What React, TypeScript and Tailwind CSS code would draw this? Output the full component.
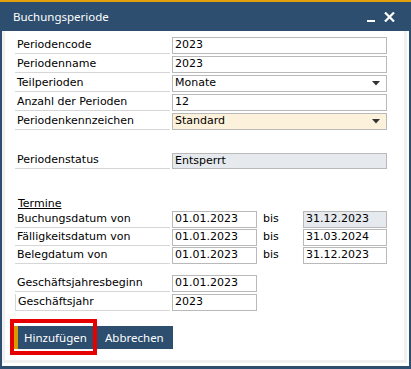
import React from "react";

const F = { fontFamily: '"DejaVu Sans", Tahoma, sans-serif' };
const UI = { fontFamily: '"Noto Sans", "Open Sans", sans-serif' };

function Label({ children, className = "" }: { children: React.ReactNode; className?: string }) {
  return (
    <div
      className={`w-[155px] h-full flex items-center pl-[2px] border-b border-[#d6d6d6] text-[11px] text-black ${className}`}
    >
      {children}
    </div>
  );
}

function Input({
  value,
  w = "w-[215px]",
  bg = "bg-white",
  dropdown = false,
}: {
  value: string;
  w?: string;
  bg?: string;
  dropdown?: boolean;
}) {
  return (
    <div
      className={`${w} ${bg} h-full border border-[#b9b9b9] flex items-center pl-[2px] pr-[6px] text-[11px] text-black justify-between`}
    >
      <span>{value}</span>
      {dropdown && (
        <svg width="8" height="5" viewBox="0 0 8 5">
          <path d="M0 0 H8 L4 4.5 Z" fill="#333" />
        </svg>
      )}
    </div>
  );
}

function Row({
  label,
  children,
  h = "h-[17px]",
  labelClass = "",
}: {
  label: string;
  children: React.ReactNode;
  h?: string;
  labelClass?: string;
}) {
  return (
    <div className={`flex ${h} gap-[2px]`}>
      <Label className={labelClass}>{label}</Label>
      {children}
    </div>
  );
}

function DateRow({ label, from, to, toBg = "bg-white" }: { label: string; from: string; to: string; toBg?: string }) {
  return (
    <div className="flex h-[17px] gap-[2px]">
      <Label>{label}</Label>
      <Input value={from} w="w-[85px]" />
      <div className="w-[42px] flex items-center pl-[4px] text-[11px] text-black">bis</div>
      <Input value={to} w="w-[84px]" bg={toBg} />
    </div>
  );
}

export default function App() {
  return (
    <div className="w-[411px] h-[369px] flex flex-col bg-white" style={F}>
      <div className="h-[2px] bg-[#e2a00c]" />
      <div className="h-[29px] bg-[#2d4e6e] flex items-center pl-[13px] pr-[16px] justify-between">
        <span className="text-white text-[11.5px]" style={UI}>
          Buchungsperiode
        </span>
        <div className="flex items-center gap-[9px]">
          <div className="w-[8px] h-[2px] bg-white mt-[9px]" />
          <svg width="11" height="10" viewBox="0 0 11 10">
            <path d="M1 0.5 L10 9.5 M10 0.5 L1 9.5" stroke="white" strokeWidth="2.2" />
          </svg>
        </div>
      </div>
      <div className="flex-1 flex border-l-2 border-r-2 border-b-[3px] border-[#2d4e6e] pr-[2px] pb-[3px]">
        <div className="flex-1 flex flex-col border-l-[3px] border-r-[3px] border-b-[3px] border-[#f0f0f0] pl-[10px] pt-[6px] relative">
          <div className="flex flex-col gap-[2px]">
            <Row label="Periodencode">
              <Input value="2023" />
            </Row>
            <Row label="Periodenname">
              <Input value="2023" />
            </Row>
            <Row label="Teilperioden">
              <Input value="Monate" dropdown />
            </Row>
            <Row label="Anzahl der Perioden">
              <Input value="12" />
            </Row>
            <Row label="Periodenkennzeichen">
              <Input value="Standard" bg="bg-[#fcf1da]" dropdown />
            </Row>
          </div>
          <div className="mt-[23px]">
            <Row label="Periodenstatus" h="h-[16px]">
              <Input value="Entsperrt" bg="bg-[#e6eaee]" />
            </Row>
          </div>
          <div className="mt-[27px] h-[14px] pl-[3px] text-[11px] text-black">
            <span className="underline">Termine</span>
          </div>
          <div className="flex flex-col gap-[1px] mt-[1px]">
            <DateRow label="Buchungsdatum von" from="01.01.2023" to="31.12.2023" toBg="bg-[#e6eaee]" />
            <DateRow label="Fälligkeitsdatum von" from="01.01.2023" to="31.03.2024" />
            <DateRow label="Belegdatum von" from="01.01.2023" to="31.12.2023" />
          </div>
          <div className="flex flex-col gap-[2px] mt-[11px]">
            <Row label="Geschäftsjahresbeginn">
              <Input value="01.01.2023" w="w-[85px]" />
            </Row>
            <Row label="Geschäftsjahr" labelClass="border-l border-[#d6d6d6]">
              <Input value="2023" w="w-[85px]" />
            </Row>
          </div>
          <div className="flex mt-[15px] ml-[-1px] h-[23px] text-white text-[11.5px]" style={UI}>
            <div className="w-[80px] flex bg-[#2d4e6e]">
              <div className="w-[4px] bg-[#d99a00]" />
              <div className="flex-1 flex items-center pl-[6px]">Hinzufügen</div>
            </div>
            <div className="w-[79px] flex items-center pl-[11px] bg-[#2d4e6e]">Abbrechen</div>
          </div>
          <div className="absolute left-[5px] top-[288px] w-[87px] h-[36px] border-[4px] border-[#e60000]" />
        </div>
      </div>
    </div>
  );
}
